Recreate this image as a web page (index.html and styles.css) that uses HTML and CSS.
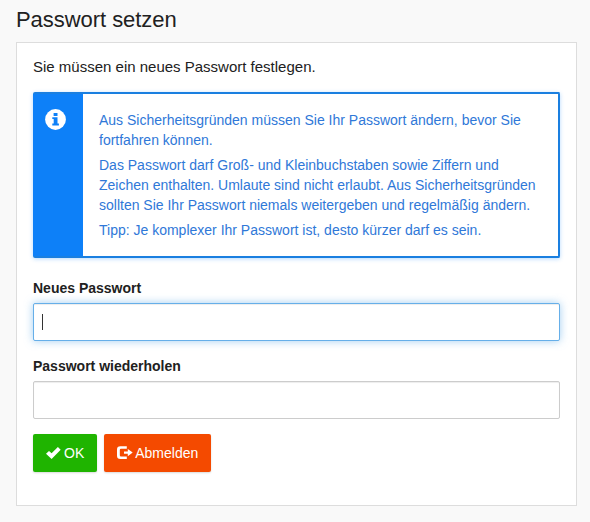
FILE: index.html
```
<!DOCTYPE html>
<html lang="de">
<head>
    <meta charset="UTF-8">
    <meta name="viewport" content="width=device-width, initial-scale=1.0">
    <title>Passwort setzen</title>
    <link rel="stylesheet" href="styles.css">
</head>
<body>
    <h1 class="title">Passwort setzen</h1>

    <form class="panel">
        <p class="intro">Sie müssen ein neues Passwort festlegen.</p>

        <div class="info-box">
            <div class="info-icon">
                <svg width="21" height="21" viewBox="0 0 21 21">
                    <circle cx="10.5" cy="10.5" r="10.4" fill="#fff"/>
                    <path d="M8.6 4h3.9v2.9H8.6zM7.3 8.2h5.2v6.4h1.4v1.9H7.3v-1.9h1.4v-4.5H7.3z" fill="#0d80f8"/>
                </svg>
            </div>
            <div class="info-text">
                <p>Aus Sicherheitsgründen müssen Sie Ihr Passwort ändern, bevor Sie fortfahren können.</p>
                <p>Das Passwort darf Groß- und Kleinbuchstaben sowie Ziffern und Zeichen enthalten. Umlaute sind nicht erlaubt. Aus Sicherheitsgründen sollten Sie Ihr Passwort niemals weitergeben und regelmäßig ändern.</p>
                <p>Tipp: Je komplexer Ihr Passwort ist, desto kürzer darf es sein.</p>
            </div>
        </div>

        <div class="form-group">
            <label for="password">Neues Passwort</label>
            <div class="field">
                <input type="password" id="password" class="input active">
                <span class="caret"></span>
            </div>
        </div>

        <div class="form-group">
            <label for="passwordRepeat">Passwort wiederholen</label>
            <div class="field">
                <input type="password" id="passwordRepeat" class="input">
            </div>
        </div>

        <div class="buttons">
            <button type="submit" class="btn btn-ok">
                <svg width="15" height="12" viewBox="0 0 15 12">
                    <path d="M0 6.8L3 3.9 5.6 6.3 11.9 0 14.7 2.8 5.6 12z" fill="#fff"/>
                </svg>
                <span>OK</span>
            </button>
            <button type="button" class="btn btn-logout">
                <svg width="16" height="14" viewBox="0 0 16 14">
                    <path d="M9.8 0.2H3.4Q0 0.2 0 3.4v6.4Q0 13 3.4 13h6.4v-2.6H4q-1.2 0-1.2-1.2V4Q2.8 2.8 4 2.8h5.8z" fill="#fff"/>
                    <path d="M10.8 3L15.7 6.6l-4.9 3.6V7.8H7V5.5h3.8z" fill="#fff"/>
                </svg>
                <span>Abmelden</span>
            </button>
        </div>
    </form>
</body>
</html>
```
FILE: styles.css
```
* {
    box-sizing: border-box;
}

body {
    margin: 0;
    padding: 6px 13px 16px 16px;
    background-color: #f9f9f9;
    color: #212121;
    font-family: "Liberation Sans", Arial, sans-serif;
    font-size: 14px;
    line-height: 20px;
}

.title {
    margin: 0 0 9px;
    font-size: 22px;
    font-weight: normal;
    line-height: 27px;
    letter-spacing: -0.05px;
}

.panel {
    height: 464px;
    padding: 14px 16px;
    background-color: #fff;
    border: 1px solid #ddd;
}

.intro {
    margin: 0 0 15px;
    font-size: 15px;
    line-height: 20px;
}

.info-box {
    display: flex;
    height: 166px;
    margin-bottom: 20px;
    border: 2px solid #1a7fe0;
    border-left: 0;
    border-radius: 2px;
    background: linear-gradient(to right, #0d80f8 50px, #fff 50px) border-box;
    color: #2f78d8;
    box-shadow: 0 1px 4px rgba(13, 128, 248, 0.3);
}

.info-icon {
    flex: 0 0 50px;
    padding: 15px 0 0 12px;
}

.info-icon svg,
.btn svg {
    display: block;
}

.info-text {
    padding: 16px 14px 0 16px;
}

.info-text p {
    margin: 0 0 5px;
}

.form-group {
    margin-bottom: 15px;
}

.form-group label {
    display: block;
    margin-bottom: 5px;
    font-weight: bold;
}

.field {
    position: relative;
}

.input {
    display: block;
    width: 100%;
    height: 38px;
    padding: 8px;
    border: 1px solid #ccc;
    border-radius: 2px;
    background-color: #fff;
    box-shadow: inset 0 1px 1px rgba(0, 0, 0, 0.075);
    outline: none;
}

.input.active {
    border-color: #66afe9;
    box-shadow: inset 0 1px 1px rgba(0, 0, 0, 0.075), 0 0 8px rgba(102, 175, 233, 0.6);
}

.caret {
    position: absolute;
    top: 11px;
    left: 9px;
    width: 1px;
    height: 16px;
    background-color: #333;
}

.buttons {
    display: flex;
    gap: 7px;
}

.btn {
    display: flex;
    align-items: center;
    gap: 3px;
    height: 38px;
    padding: 0 13px;
    border: 0;
    border-radius: 2px;
    color: #fff;
    font: 14px/20px "Liberation Sans", Arial, sans-serif;
    box-shadow: 0 1px 2px rgba(0, 0, 0, 0.15);
    cursor: pointer;
}

.btn-ok {
    background-color: #1fb400;
}

.btn-logout {
    gap: 2px;
    background-color: #f44a00;
}
```
